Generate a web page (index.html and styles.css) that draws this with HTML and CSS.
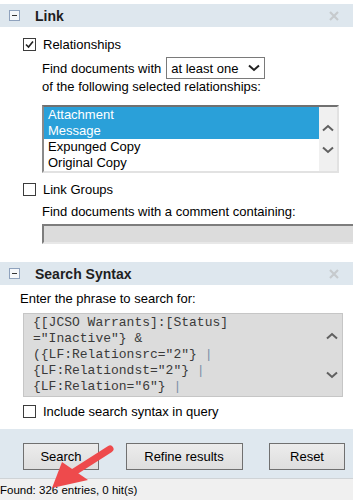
FILE: index.html
```html
<!DOCTYPE html>
<html>
<head>
<meta charset="utf-8">
<link rel="stylesheet" href="styles.css">
</head>
<body>
<div class="panel">
  <div class="section-head">
    <span class="toggle"></span>
    <span class="title">Link</span>
    <svg class="close" width="10" height="10" viewBox="0 0 10 10"><path d="M1 1L9 9M9 1L1 9" stroke="#c6cacd" stroke-width="2.2"/></svg>
  </div>

  <div class="link-body">
    <div class="check-row">
      <span class="cb"><svg width="11" height="11" viewBox="0 0 11 11"><path d="M2 5.5L4.5 8L9 2.5" fill="none" stroke="#222" stroke-width="1.6"/></svg></span>
      <span>Relationships</span>
    </div>
    <div class="indent">
      <div class="find-row">
        <span>Find documents with</span>
        <span class="select">at least one
          <svg width="12" height="8" viewBox="0 0 12 8"><path d="M1 1.5L6 6L11 1.5" fill="none" stroke="#222" stroke-width="2"/></svg>
        </span>
      </div>
      <div class="line">of the following selected relationships:</div>
      <div class="listbox">
        <div class="items">
          <div class="item sel">Attachment</div>
          <div class="item sel">Message</div>
          <div class="item">Expunged Copy</div>
          <div class="item">Original Copy</div>
        </div>
        <div class="vscroll">
          <svg width="12" height="8" viewBox="0 0 12 8"><path d="M1 6.5L6 2L11 6.5" fill="none" stroke="#606060" stroke-width="2"/></svg>
          <svg width="12" height="8" viewBox="0 0 12 8"><path d="M1 1.5L6 6L11 1.5" fill="none" stroke="#606060" stroke-width="2"/></svg>
        </div>
      </div>
    </div>

    <div class="check-row groups">
      <span class="cb"></span>
      <span>Link Groups</span>
    </div>
    <div class="indent">
      <div class="line comment">Find documents with a comment containing:</div>
      <div class="input"></div>
    </div>
  </div>

  <div class="section-head second">
    <span class="toggle"></span>
    <span class="title">Search Syntax</span>
    <svg class="close" width="10" height="10" viewBox="0 0 10 10"><path d="M1 1L9 9M9 1L1 9" stroke="#c6cacd" stroke-width="2.2"/></svg>
  </div>

  <div class="syntax-body">
    <div class="line phrase">Enter the phrase to search for:</div>
    <div class="textarea">
      <div class="code">{[JCSO Warrants]:[Status]<br>="Inactive"} &amp;<br>({LF:Relationsrc="2"} <span class="pipe">|</span><br>{LF:Relationdst="2"} <span class="pipe">|</span><br>{LF:Relation="6"} <span class="pipe">|</span></div>
      <div class="vscroll plain">
        <svg width="12" height="8" viewBox="0 0 12 8"><path d="M1 6.5L6 2L11 6.5" fill="none" stroke="#606060" stroke-width="2"/></svg>
        <svg width="12" height="8" viewBox="0 0 12 8"><path d="M1 1.5L6 6L11 1.5" fill="none" stroke="#606060" stroke-width="2"/></svg>
      </div>
    </div>
    <div class="check-row include">
      <span class="cb"></span>
      <span>Include search syntax in query</span>
    </div>
  </div>

  <div class="footer">
    <button class="btn search">Search</button>
    <button class="btn refine">Refine results</button>
    <button class="btn reset">Reset</button>
  </div>

  <div class="status">Found: 326 entries, 0 hit(s)<span class="status-line"></span></div>

  <svg class="arrow" width="353" height="500" viewBox="0 0 353 500">
    <line x1="110" y1="449" x2="74" y2="472" stroke="#ee4a4c" stroke-width="7" stroke-linecap="round"/>
    <polygon points="52,488 62,462 88,480" fill="#ee4a4c"/>
  </svg>
</div>
</body>
</html>
```

FILE: styles.css
```css
html, body {
  margin: 0;
  padding: 0;
  background: #ffffff;
}

body {
  width: 353px;
  height: 500px;
  overflow: hidden;
  font-family: "Liberation Sans", Arial, sans-serif;
  font-size: 13px;
  color: #000;
}

.panel {
  position: relative;
  width: 353px;
  height: 500px;
  display: flex;
  flex-direction: column;
}

.section-head {
  margin-top: 4px;
  height: 23px;
  background: #dee7ee;
  display: flex;
  align-items: center;
  flex-shrink: 0;
}

.section-head.second {
  margin-top: 18px;
}

.toggle {
  position: relative;
  width: 9px;
  height: 9px;
  margin-left: 9px;
  border: 1px solid #8fa2bd;
  background: #f5f7fa;
}

.toggle::after {
  content: "";
  position: absolute;
  left: 2px;
  top: 4px;
  width: 5px;
  height: 1px;
  background: #333;
}

.title {
  margin-left: 15px;
  font-size: 14px;
  font-weight: bold;
  color: #1e1e1e;
}

.close {
  margin-left: auto;
  margin-right: 14px;
}

.link-body {
  padding-top: 9px;
}

.check-row {
  display: flex;
  align-items: center;
  height: 16px;
  padding-left: 23px;
  gap: 7px;
}

.cb {
  width: 11px;
  height: 11px;
  border: 1px solid #3c3c3c;
  background: #fff;
  display: flex;
  align-items: center;
  justify-content: center;
}

.indent {
  padding-left: 42px;
}

.find-row {
  margin-top: 5px;
  height: 22px;
  display: flex;
  align-items: center;
  gap: 5px;
}

.select {
  height: 20px;
  width: 89px;
  border: 1px solid #7a7a7a;
  padding-left: 4px;
  display: flex;
  align-items: center;
  justify-content: space-between;
  padding-right: 4px;
  box-sizing: content-box;
}

.line {
  height: 16px;
  line-height: 16px;
}

.listbox {
  margin-top: 10px;
  width: 293px;
  height: 64px;
  display: flex;
  border-top: 2px solid #707070;
  border-left: 2px solid #8a8a8a;
  border-right: 2px solid #e2e2e2;
  border-bottom: 2px solid #e2e2e2;
}

.items {
  flex: 1;
}

.item {
  height: 16px;
  line-height: 16px;
  padding-left: 4px;
}

.item.sel {
  background: #2aa0d9;
  color: #fff;
}

.vscroll {
  width: 18px;
  background: #f0f0f0;
  display: flex;
  flex-direction: column;
  align-items: center;
  justify-content: center;
  gap: 14px;
}

.vscroll.plain {
  background: transparent;
  gap: 31px;
  width: 20px;
}

.groups {
  margin-top: 8px;
}

.comment {
  margin-top: 7px;
}

.input {
  margin-top: 4px;
  height: 16px;
  background: #dcdcdc;
  border-top: 2px solid #7d7d7d;
  border-left: 2px solid #7d7d7d;
  border-bottom: 2px solid #e8e8e8;
}

.syntax-body {
  padding-left: 20px;
}

.phrase {
  margin-top: 6px;
}

.textarea {
  margin-top: 6px;
  margin-left: 3px;
  width: 318px;
  height: 82px;
  border: 1px solid #c6c6c6;
  background: #dcdcdc;
  display: flex;
}

.code {
  flex: 1;
  padding: 1px 0 0 9px;
  font-family: "Liberation Mono", "Courier New", monospace;
  font-size: 13px;
  font-weight: normal;
  line-height: 16px;
  color: #3a3a3a;
  white-space: nowrap;
}

.pipe {
  color: #7b8fa8;
}

.include {
  margin-top: 6px;
  padding-left: 3px;
}

.footer {
  margin-top: 10px;
  height: 49px;
  background: #dfe8ef;
  display: flex;
  align-items: flex-start;
  justify-content: space-between;
  padding: 14px 8px 0 23px;
  box-sizing: border-box;
  flex-shrink: 0;
}

.btn {
  height: 27px;
  border: 1px solid #707070;
  background: linear-gradient(#ececec, #dedede);
  font-family: "Liberation Sans", Arial, sans-serif;
  font-size: 13px;
  color: #000;
  padding: 0;
}

.search { width: 76px; }
.refine { width: 117px; }
.reset { width: 76px; }

.status {
  position: relative;
  flex: 1;
  border-top: 1px solid #cfd3d6;
  background: #f0f0f0;
  font-size: 11.5px;
  line-height: 22px;
}

.status-line {
  position: absolute;
  left: 0;
  bottom: 0;
  width: 57px;
  height: 1px;
  background: #333;
}

.arrow {
  position: absolute;
  left: 0;
  top: 0;
  pointer-events: none;
}
```
